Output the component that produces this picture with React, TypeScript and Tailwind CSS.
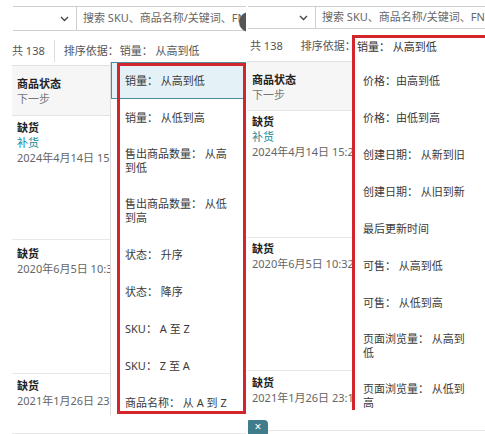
import React from "react";

const font = "font-['Noto_Sans','Noto_Sans_CJK_SC',sans-serif]";

const leftItems: string[][] = [
  ["销量： 从高到低"],
  ["销量： 从低到高"],
  ["售出商品数量： 从高", "到低"],
  ["售出商品数量： 从低", "到高"],
  ["状态： 升序"],
  ["状态： 降序"],
  ["SKU： A 至 Z"],
  ["SKU： Z 至 A"],
  ["商品名称： 从 A 到 Z"],
];

const rightItems: string[][] = [
  ["价格：由高到低"],
  ["价格：由低到高"],
  ["创建日期： 从新到旧"],
  ["创建日期： 从旧到新"],
  ["最后更新时间"],
  ["可售： 从高到低"],
  ["可售： 从低到高"],
  ["页面浏览量： 从高到", "低"],
  ["页面浏览量： 从低到", "高"],
];

function Chevron() {
  return (
    <svg width="9" height="6" viewBox="0 0 9 6" fill="none">
      <path d="M1 1 L4.5 4.5 L8 1" stroke="#444" strokeWidth="1.3" />
    </svg>
  );
}

function TopBar({ offset, selectWidth, height }: { offset: string; selectWidth: string; height: string }) {
  return (
    <div className={`pt-[6px] flex ${offset}`}>
      <div className={`${selectWidth} ${height} border-y border-r border-[#cfcfcf] flex items-center justify-end pr-[7px] shrink-0`}>
        <Chevron />
      </div>
      <div className={`flex-1 ${height} border-y border-[#cfcfcf] flex items-center pl-[6px] overflow-hidden`}>
        <span className="text-[11px] text-[#666] whitespace-nowrap">搜索 SKU、商品名称/关键词、FNSKU、ASIN</span>
      </div>
    </div>
  );
}

function MenuItem({ lines, active, pl }: { lines: string[]; active?: boolean; pl: string }) {
  const pad = lines.length > 1 ? "py-[10px]" : "py-[10.5px]";
  return (
    <div
      className={`${pad} ${pl} leading-[14px] text-[11px] text-[#3a3a3a] border ${
        active ? "bg-[#e4f1f7] border-[#4b8e9b]" : "border-transparent"
      }`}
    >
      {lines.map((l) => (
        <div key={l} className="whitespace-nowrap">
          {l}
        </div>
      ))}
    </div>
  );
}

type Row = { pt: string; h: string; lines: { text: string; kind: "bold" | "link" | "muted" }[] };

function StockTable({ header, rows, offset }: { header: string; rows: Row[]; offset: string }) {
  return (
    <div className={`${offset} text-[11px] leading-[15px]`}>
      <div className={`bg-[#f6f6f6] ${header} border-b border-[#e4e4e4] px-[5px] pt-[10px]`}>
        <div className="font-bold text-[#222]">商品状态</div>
        <div className="text-[#777]">下一步</div>
      </div>
      {rows.map((r, i) => (
        <div key={i} className={`${r.h} ${r.pt} px-[5px] border-b border-[#e8e8e8]`}>
          {r.lines.map((l) => (
            <div
              key={l.text}
              className={`whitespace-nowrap ${
                l.kind === "bold" ? "font-bold text-[#222]" : l.kind === "link" ? "text-[#168a99]" : "text-[#666]"
              }`}
            >
              {l.text}
            </div>
          ))}
        </div>
      ))}
    </div>
  );
}

export default function App() {
  return (
    <div className={`w-[485px] h-[434px] bg-white flex overflow-hidden relative ${font}`}>
      {/* left capture */}
      <div className="w-[246px] h-full relative overflow-hidden shrink-0">
        <TopBar offset="ml-[13px]" selectWidth="w-[64px]" height="h-[25px]" />
        <div className="ml-[12px] h-[35px] pt-[6px] flex items-center text-[11px] text-[#555] whitespace-nowrap border-b border-[#e0e0e0]">
          <span>共 138</span>
          <span className="w-px h-[22px] bg-[#dcdcdc] mx-[9px]" />
          <span>排序依据：</span>
          <span className="ml-[1px]">销量： 从高到低</span>
        </div>
        <StockTable
          offset="ml-[12px]"
          header="h-[50px]"
          rows={[
            {
              pt: "pt-[4px]",
              h: "h-[124px]",
              lines: [
                { text: "缺货", kind: "bold" },
                { text: "补货", kind: "link" },
                { text: "2024年4月14日 15:22", kind: "muted" },
              ],
            },
            {
              pt: "pt-[6px]",
              h: "h-[134px]",
              lines: [
                { text: "缺货", kind: "bold" },
                { text: "2020年6月5日 10:32", kind: "muted" },
              ],
            },
            {
              pt: "pt-[4px]",
              h: "h-[60px]",
              lines: [
                { text: "缺货", kind: "bold" },
                { text: "2021年1月26日 23:10", kind: "muted" },
              ],
            },
          ]}
        />

        {/* open sort menu */}
        <div className="absolute left-[110px] top-[62px] w-[136px] h-[353px] bg-white border-l border-[#dcdcdc]">
          {leftItems.map((lines, i) => (
            <MenuItem key={i} lines={lines} active={i === 0} pl="pl-[13px]" />
          ))}
        </div>
        <div className="absolute left-[117px] top-[63px] w-[129px] h-[351px] border-[3px] border-[#d3262c] pointer-events-none" />

        <div className="absolute left-[239px] top-[12px] w-[10px] h-[20px] rounded-l-full bg-[#555]" />
      </div>

      {/* right capture */}
      <div className="flex-1 h-full relative overflow-hidden">
        <TopBar offset="ml-[2px]" selectWidth="w-[68px]" height="h-[23px]" />
        <div className="ml-[1px] h-[33px] pl-[3px] pt-[2px] flex items-center text-[11px] text-[#555] whitespace-nowrap border-b border-[#e0e0e0]">
          <span>共 138</span>
          <span className="ml-[18px]">排序依据：</span>
        </div>
        <StockTable
          offset="ml-[1px]"
          header="h-[49px]"
          rows={[
            {
              pt: "pt-[3px]",
              h: "h-[127px]",
              lines: [
                { text: "缺货", kind: "bold" },
                { text: "补货", kind: "link" },
                { text: "2024年4月14日 15:22", kind: "muted" },
              ],
            },
            {
              pt: "pt-[3px]",
              h: "h-[133px]",
              lines: [
                { text: "缺货", kind: "bold" },
                { text: "2020年6月5日 10:32", kind: "muted" },
              ],
            },
            {
              pt: "pt-[4px]",
              h: "h-[60px]",
              lines: [
                { text: "缺货", kind: "bold" },
                { text: "2021年1月26日 23:10", kind: "muted" },
              ],
            },
          ]}
        />

        <div className="absolute left-[106px] top-[35px] right-0 h-[380px] bg-white">
          <div className="pl-[5px] pt-[4px] h-[27px] text-[11px] leading-[15px] text-[#333] whitespace-nowrap">销量： 从高到低</div>
          {rightItems.map((lines, i) => (
            <MenuItem key={i} lines={lines} pl="pl-[10px]" />
          ))}
        </div>
        <div className="absolute left-[106px] top-[35px] right-0 h-[375px] border-t-[3px] border-l-[3px] border-[#d3262c] pointer-events-none" />
      </div>

      <div className="absolute left-[248px] top-[420px] w-[20px] h-[14px] bg-[#3f7d8d] rounded-tr-[4px] rounded-tl-[1px] flex items-center justify-center text-white text-[12px] leading-none">
        ×
      </div>
    </div>
  );
}
